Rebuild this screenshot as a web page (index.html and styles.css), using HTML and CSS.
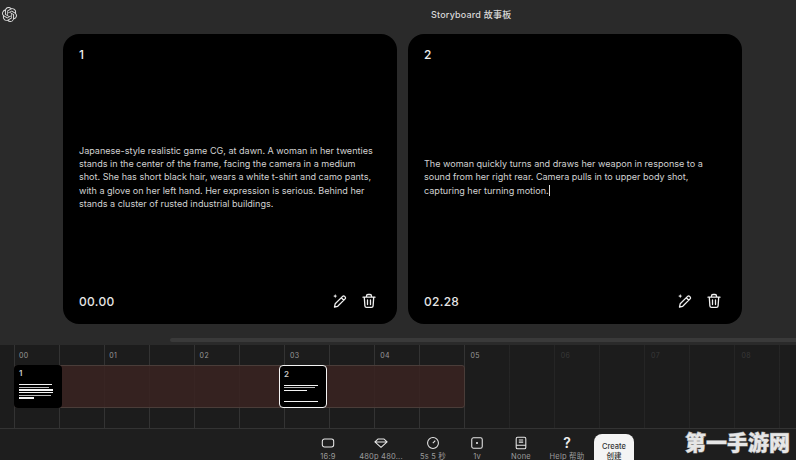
FILE: index.html
```html
<!DOCTYPE html>
<html lang="zh">
<head>
    <meta charset="UTF-8">
    <meta name="viewport" content="width=device-width, initial-scale=1.0">
    <title>Storyboard 故事板</title>
    <link rel="stylesheet" href="styles.css">
</head>
<body>
    <div class="app">
        <div class="top-bar">
            <svg class="logo" viewBox="0 0 24 24"><path d="M22.2819 9.8211a5.9847 5.9847 0 0 0-.5157-4.9108 6.0462 6.0462 0 0 0-6.5098-2.9A6.0651 6.0651 0 0 0 4.9807 4.1818a5.9847 5.9847 0 0 0-3.9977 2.9 6.0462 6.0462 0 0 0 .7427 7.0966 5.98 5.98 0 0 0 .511 4.9107 6.051 6.051 0 0 0 6.5146 2.9001A5.9847 5.9847 0 0 0 13.2599 24a6.0557 6.0557 0 0 0 5.7718-4.2058 5.9894 5.9894 0 0 0 3.9977-2.9001 6.0557 6.0557 0 0 0-.7475-7.0729zm-9.022 12.6081a4.4755 4.4755 0 0 1-2.8764-1.0408l.1419-.0804 4.7783-2.7582a.7948.7948 0 0 0 .3927-.6813v-6.7369l2.02 1.1686a.071.071 0 0 1 .038.052v5.5826a4.504 4.504 0 0 1-4.4945 4.4944zm-9.6607-4.1254a4.4708 4.4708 0 0 1-.5346-3.0137l.142.0852 4.783 2.7582a.7712.7712 0 0 0 .7806 0l5.8428-3.3685v2.3324a.0804.0804 0 0 1-.0332.0615L9.74 19.9502a4.4992 4.4992 0 0 1-6.1408-1.6464zM2.3408 7.8956a4.485 4.485 0 0 1 2.3655-1.9728V11.6a.7664.7664 0 0 0 .3879.6765l5.8144 3.3543-2.0201 1.1685a.0757.0757 0 0 1-.071 0l-4.8303-2.7865A4.504 4.504 0 0 1 2.3408 7.872zm16.5963 3.8558L13.1038 8.364 15.1192 7.2a.0757.0757 0 0 1 .071 0l4.8303 2.7913a4.4944 4.4944 0 0 1-.6765 8.1042v-5.6772a.79.79 0 0 0-.407-.667zm2.0107-3.0231l-.142-.0852-4.7735-2.7818a.7759.7759 0 0 0-.7854 0L9.409 9.2297V6.8974a.0662.0662 0 0 1 .0284-.0615l4.8303-2.7866a4.4992 4.4992 0 0 1 6.6802 4.66zM8.3065 12.863l-2.02-1.1638a.0804.0804 0 0 1-.038-.0567V6.0742a4.4992 4.4992 0 0 1 7.3757-3.4537l-.142.0805L8.704 5.459a.7948.7948 0 0 0-.3927.6813zm1.0976-2.3654l2.602-1.4998 2.6069 1.4998v2.9994l-2.5974 1.4997-2.6067-1.4997Z"/></svg>
            <div class="page-title">Storyboard 故事板</div>
        </div>

        <div class="cards">
            <div class="card">
                <div class="card-num">1</div>
                <div class="card-text">
                    <p>Japanese-style realistic game CG, at dawn. A woman in her twenties stands in the center of the frame, facing the camera in a medium shot. She has short black hair, wears a white t-shirt and camo pants, with a glove on her left hand. Her expression is serious. Behind her stands a cluster of rusted industrial buildings.</p>
                </div>
                <div class="card-foot">
                    <span class="card-time">00.00</span>
                    <svg class="card-icon" viewBox="0 0 16 16"><path d="M5.700 13.300l-3.200.7.700-3.200 7.400-7.400a1.400 1.400 0 0 1 2 0l.5.5a1.400 1.400 0 0 1 0 2zM9.300 4.700l2.500 2.500"/><path class="spark" d="M3.200 1l.6 1.500 1.500.6-1.500.6-.6 1.500-.6-1.500-1.500-.6 1.500-.6z"/></svg>
                    <svg class="card-icon" viewBox="0 0 16 16"><path d="M2 4.200h12M5.500 4V3a1.500 1.500 0 0 1 1.500-1.500h2A1.500 1.500 0 0 1 10.500 3v1M3.300 4.400l.6 8.500a1.600 1.600 0 0 0 1.600 1.500h5a1.600 1.600 0 0 0 1.600-1.500l.6-8.500M6.500 7v4.500M9.500 7v4.500"/></svg>
                </div>
            </div>
            <div class="card">
                <div class="card-num">2</div>
                <div class="card-text">
                    <p>The woman quickly turns and draws her weapon in response to a sound from her right rear. Camera pulls in to upper body shot, capturing her turning motion.<span class="caret"></span></p>
                </div>
                <div class="card-foot">
                    <span class="card-time">02.28</span>
                    <svg class="card-icon" viewBox="0 0 16 16"><path d="M5.700 13.300l-3.200.7.700-3.200 7.400-7.400a1.400 1.400 0 0 1 2 0l.5.5a1.400 1.400 0 0 1 0 2zM9.300 4.700l2.500 2.500"/><path class="spark" d="M3.200 1l.6 1.500 1.500.6-1.500.6-.6 1.500-.6-1.500-1.500-.6 1.500-.6z"/></svg>
                    <svg class="card-icon" viewBox="0 0 16 16"><path d="M2 4.200h12M5.500 4V3a1.500 1.500 0 0 1 1.500-1.500h2A1.500 1.500 0 0 1 10.500 3v1M3.300 4.400l.6 8.500a1.600 1.600 0 0 0 1.600 1.500h5a1.600 1.600 0 0 0 1.600-1.500l.6-8.500M6.500 7v4.500M9.500 7v4.500"/></svg>
                </div>
            </div>
        </div>

        <div class="h-scroll"></div>

        <div class="timeline">
            <div class="ruler">
                <span>00</span><span>01</span><span>02</span><span>03</span><span>04</span><span>05</span>
                <span class="dim">06</span><span class="dim">07</span><span class="dim">08</span>
            </div>
            <div class="track">
                <div class="clip">
                    <div class="clip-num">1</div>
                    <div class="clip-lines">
                        <i class="w33"></i><i class="w30 grey"></i><i class="w34"></i><i class="w34"></i><i class="w32 grey"></i><i class="w15"></i>
                    </div>
                </div>
                <div class="clip clip-active">
                    <div class="clip-num">2</div>
                    <div class="clip-lines">
                        <i class="w34"></i><i class="w31 grey"></i><i class="w23"></i><i class="w34 last"></i>
                    </div>
                </div>
            </div>
        </div>

        <div class="toolbar">
            <div class="tool">
                <svg viewBox="0 0 16 16"><rect x="1.500" y="3.500" width="13" height="9" rx="2.500"/></svg>
                <span>16:9</span>
            </div>
            <div class="tool">
                <svg viewBox="0 0 16 16"><path d="M4.500 3.500h7L15 6.800 8 13 1 6.800zM1.500 6.800h13"/></svg>
                <span>480p 480...</span>
            </div>
            <div class="tool">
                <svg viewBox="0 0 16 16"><circle cx="8" cy="8" r="6.200"/><path d="M7.800 8.200l2.800-3"/></svg>
                <span>5s 5 秒</span>
            </div>
            <div class="tool">
                <svg viewBox="0 0 16 16"><rect x="2" y="2" width="12" height="12" rx="2"/><circle class="solid" cx="8" cy="8" r="1.200"/></svg>
                <span>1v</span>
            </div>
            <div class="tool">
                <svg viewBox="0 0 16 16"><rect x="2.500" y="1.500" width="11" height="13" rx="1.500"/><path d="M5.500 4.500h5M5.500 7h5M2.500 10.500h11"/></svg>
                <span>None</span>
            </div>
            <div class="tool">
                <div class="help-mark">?</div>
                <span>Help 帮助</span>
            </div>
            <button class="create-button">Create<br>创建</button>
        </div>

        <div class="watermark">第一手游网</div>
    </div>
</body>
</html>
```

FILE: styles.css
```css
body {
    margin: 0;
    padding: 0;
    background-color: #2a2a2a;
    font-family: Inter, "Noto Sans CJK SC", sans-serif;
    color: white;
}
.app {
    width: 796px;
    height: 460px;
    overflow: hidden;
    position: relative;
    display: flex;
    flex-direction: column;
}
.top-bar {
    height: 34px;
    flex: none;
    display: flex;
    align-items: flex-start;
}
.logo {
    width: 15px;
    height: 15px;
    margin: 7px 0 0 2px;
    fill: #dedede;
    flex: none;
}
.page-title {
    margin: 9px 0 0 414px;
    font-size: 9px;
    line-height: 11px;
    font-weight: 500;
    color: #d8d8d8;
    letter-spacing: 0.2px;
}
.cards {
    display: flex;
    gap: 11px;
    padding-left: 63px;
    flex: none;
}
.card {
    width: 334px;
    height: 290px;
    box-sizing: border-box;
    padding: 13px 20px 14px 16px;
    background: #000;
    border-radius: 16px;
    display: flex;
    flex-direction: column;
}
.card-num {
    font-size: 12px;
    line-height: 15px;
    font-weight: 500;
    color: #eee;
}
.card-text {
    flex: 1;
    display: flex;
    align-items: center;
    font-size: 9.05px;
    line-height: 13.3px;
    color: #d2d2d2;
}
.card-text p {
    margin: 0;
    width: 298px;
}
.caret {
    display: inline-block;
    width: 1px;
    height: 11px;
    background: #ddd;
    vertical-align: -2px;
}
.card-foot {
    display: flex;
    align-items: center;
    height: 18px;
    gap: 13px;
}
.card-time {
    flex: 1;
    font-size: 12px;
    font-weight: 500;
    color: #e6e6e6;
    letter-spacing: 0.3px;
}
.card-icon {
    width: 16px;
    height: 16px;
    fill: none;
    stroke: #f0f0f0;
    stroke-width: 1.3;
    stroke-linecap: round;
    stroke-linejoin: round;
}
.card-icon .spark {
    fill: #f0f0f0;
    stroke: none;
}
.h-scroll {
    height: 4px;
    margin: 14px 0 3px 170px;
    background: #3a3a3a;
    border-radius: 2px 0 0 2px;
    flex: none;
}
.timeline {
    height: 84px;
    flex: none;
    box-sizing: border-box;
    border-bottom: 1px solid #333;
    background-color: #1c1c1c;
    background-image:
        linear-gradient(to right, transparent 465px, rgba(28, 28, 28, 0.6) 465px),
        repeating-linear-gradient(to right, #333 0, #333 1px, transparent 1px, transparent 45px);
    background-position: 0 0, 14px 0;
}
.ruler {
    height: 20px;
    padding-left: 19px;
    display: flex;
    align-items: center;
    font-size: 7px;
    color: #999;
    letter-spacing: 0.4px;
}
.ruler span {
    width: 90.3px;
    flex: none;
}
.ruler .dim {
    color: #383838;
}
.track {
    width: 451px;
    height: 43px;
    margin-left: 14px;
    box-sizing: border-box;
    background: rgba(56, 36, 33, 0.9);
    border: 1px solid #4a3d39;
    border-radius: 3px;
    display: flex;
}
.clip {
    width: 48px;
    height: 43px;
    margin: -1px 0 0 -1px;
    box-sizing: border-box;
    padding: 3px 5px;
    background: #000;
    border-radius: 4px;
    flex: none;
}
.clip-active {
    margin-left: 217px;
    border: 1.5px solid #f4f4f4;
    padding: 2.5px 4px;
}
.clip-num {
    font-size: 8px;
    line-height: 11px;
    font-weight: 600;
    color: #ccc;
}
.clip-lines {
    margin-top: 5px;
    display: flex;
    flex-direction: column;
    gap: 1.4px;
}
.clip-lines i {
    display: block;
    height: 1.3px;
    background: #f4f4f4;
}
.clip-lines .grey {
    background: #b8b8b8;
}
.clip-lines .last {
    margin-top: 8px;
}
.w34 { width: 34px; }
.w33 { width: 33px; }
.w32 { width: 32px; }
.w31 { width: 31px; }
.w30 { width: 30px; }
.w23 { width: 23px; }
.w15 { width: 15px; }
.toolbar {
    flex: 1;
    min-height: 0;
    background: #1e1e1e;
    padding: 7px 0 0 306px;
    display: grid;
    grid-template-columns: 44px 62px 42px 46px 42px 50px 42px;
    align-items: start;
}
.tool {
    display: flex;
    flex-direction: column;
    align-items: center;
    white-space: nowrap;
}
.tool svg {
    width: 14px;
    height: 14px;
    fill: none;
    stroke: #e8e8e8;
    stroke-width: 1.2;
    stroke-linejoin: round;
}
.tool svg .solid {
    fill: #e8e8e8;
    stroke: none;
}
.tool span {
    margin-top: 2px;
    font-size: 7.5px;
    line-height: 9px;
    color: #9c9c9c;
    letter-spacing: 0.2px;
}
.help-mark {
    height: 14px;
    font-size: 14px;
    line-height: 14px;
    font-weight: 600;
    color: #eee;
}
.create-button {
    margin: -2px 0 0 2px;
    width: 40px;
    height: 29px;
    padding: 6px 0 0;
    border: none;
    border-radius: 8px 8px 0 0;
    background: #f4f4f4;
    color: #333;
    font-family: inherit;
    font-size: 7.5px;
    line-height: 10px;
    font-weight: 500;
}
.watermark {
    position: absolute;
    right: 6px;
    bottom: 7px;
    font-family: "Noto Sans CJK SC", sans-serif;
    font-size: 21px;
    line-height: 24px;
    font-weight: 900;
    color: #e6e6e6;
    -webkit-text-stroke: 1px #8c8c8c;
    paint-order: stroke fill;
}
```
